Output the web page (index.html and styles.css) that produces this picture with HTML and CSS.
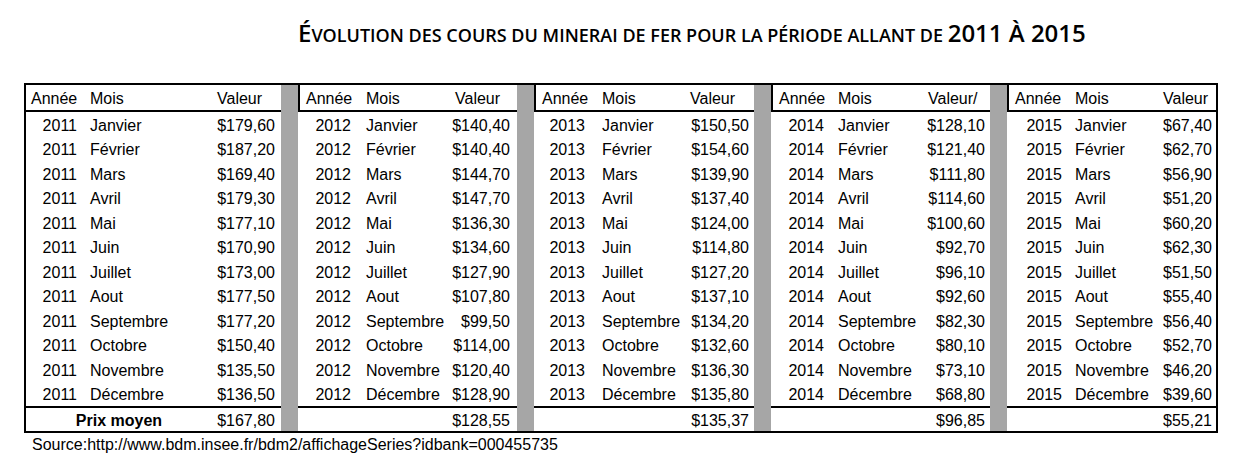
FILE: index.html
```html
<!DOCTYPE html>
<html lang="fr">
<head>
<meta charset="utf-8">
<title>Évolution des cours du minerai de fer</title>
<link rel="stylesheet" href="styles.css">
</head>
<body>
<div class="page">
  <h1 class="title"><span class="big">É</span><span class="sc">VOLUTION DES COURS DU MINERAI DE FER POUR LA PÉRIODE ALLANT DE </span><span class="big">2011 À 2015</span></h1>

  <div class="sheet">
    <div class="block b1">
      <div class="r hd"><span class="ha">Année</span><span class="m">Mois</span><span class="hv">Valeur</span></div>
      <div class="data">
        <div class="r"><span class="y">2011</span><span class="m">Janvier</span><span class="v">$179,60</span></div>
        <div class="r"><span class="y">2011</span><span class="m">Février</span><span class="v">$187,20</span></div>
        <div class="r"><span class="y">2011</span><span class="m">Mars</span><span class="v">$169,40</span></div>
        <div class="r"><span class="y">2011</span><span class="m">Avril</span><span class="v">$179,30</span></div>
        <div class="r"><span class="y">2011</span><span class="m">Mai</span><span class="v">$177,10</span></div>
        <div class="r"><span class="y">2011</span><span class="m">Juin</span><span class="v">$170,90</span></div>
        <div class="r"><span class="y">2011</span><span class="m">Juillet</span><span class="v">$173,00</span></div>
        <div class="r"><span class="y">2011</span><span class="m">Aout</span><span class="v">$177,50</span></div>
        <div class="r"><span class="y">2011</span><span class="m">Septembre</span><span class="v">$177,20</span></div>
        <div class="r"><span class="y">2011</span><span class="m">Octobre</span><span class="v">$150,40</span></div>
        <div class="r"><span class="y">2011</span><span class="m">Novembre</span><span class="v">$135,50</span></div>
        <div class="r"><span class="y">2011</span><span class="m">Décembre</span><span class="v">$136,50</span></div>
      </div>
      <div class="r tot"><span class="lbl">Prix moyen</span><span class="v">$167,80</span></div>
    </div>
    <div class="sep"></div>

    <div class="block b2">
      <div class="r hd"><span class="ha">Année</span><span class="m">Mois</span><span class="hv">Valeur</span></div>
      <div class="data">
        <div class="r"><span class="y">2012</span><span class="m">Janvier</span><span class="v">$140,40</span></div>
        <div class="r"><span class="y">2012</span><span class="m">Février</span><span class="v">$140,40</span></div>
        <div class="r"><span class="y">2012</span><span class="m">Mars</span><span class="v">$144,70</span></div>
        <div class="r"><span class="y">2012</span><span class="m">Avril</span><span class="v">$147,70</span></div>
        <div class="r"><span class="y">2012</span><span class="m">Mai</span><span class="v">$136,30</span></div>
        <div class="r"><span class="y">2012</span><span class="m">Juin</span><span class="v">$134,60</span></div>
        <div class="r"><span class="y">2012</span><span class="m">Juillet</span><span class="v">$127,90</span></div>
        <div class="r"><span class="y">2012</span><span class="m">Aout</span><span class="v">$107,80</span></div>
        <div class="r"><span class="y">2012</span><span class="m">Septembre</span><span class="v">$99,50</span></div>
        <div class="r"><span class="y">2012</span><span class="m">Octobre</span><span class="v">$114,00</span></div>
        <div class="r"><span class="y">2012</span><span class="m">Novembre</span><span class="v">$120,40</span></div>
        <div class="r"><span class="y">2012</span><span class="m">Décembre</span><span class="v">$128,90</span></div>
      </div>
      <div class="r tot"><span class="lbl"></span><span class="v">$128,55</span></div>
    </div>
    <div class="sep"></div>

    <div class="block b3">
      <div class="r hd"><span class="ha">Année</span><span class="m">Mois</span><span class="hv">Valeur</span></div>
      <div class="data">
        <div class="r"><span class="y">2013</span><span class="m">Janvier</span><span class="v">$150,50</span></div>
        <div class="r"><span class="y">2013</span><span class="m">Février</span><span class="v">$154,60</span></div>
        <div class="r"><span class="y">2013</span><span class="m">Mars</span><span class="v">$139,90</span></div>
        <div class="r"><span class="y">2013</span><span class="m">Avril</span><span class="v">$137,40</span></div>
        <div class="r"><span class="y">2013</span><span class="m">Mai</span><span class="v">$124,00</span></div>
        <div class="r"><span class="y">2013</span><span class="m">Juin</span><span class="v">$114,80</span></div>
        <div class="r"><span class="y">2013</span><span class="m">Juillet</span><span class="v">$127,20</span></div>
        <div class="r"><span class="y">2013</span><span class="m">Aout</span><span class="v">$137,10</span></div>
        <div class="r"><span class="y">2013</span><span class="m">Septembre</span><span class="v">$134,20</span></div>
        <div class="r"><span class="y">2013</span><span class="m">Octobre</span><span class="v">$132,60</span></div>
        <div class="r"><span class="y">2013</span><span class="m">Novembre</span><span class="v">$136,30</span></div>
        <div class="r"><span class="y">2013</span><span class="m">Décembre</span><span class="v">$135,80</span></div>
      </div>
      <div class="r tot"><span class="lbl"></span><span class="v">$135,37</span></div>
    </div>
    <div class="sep"></div>

    <div class="block b4">
      <div class="r hd"><span class="ha">Année</span><span class="m">Mois</span><span class="hv">Valeur/</span></div>
      <div class="data">
        <div class="r"><span class="y">2014</span><span class="m">Janvier</span><span class="v">$128,10</span></div>
        <div class="r"><span class="y">2014</span><span class="m">Février</span><span class="v">$121,40</span></div>
        <div class="r"><span class="y">2014</span><span class="m">Mars</span><span class="v">$111,80</span></div>
        <div class="r"><span class="y">2014</span><span class="m">Avril</span><span class="v">$114,60</span></div>
        <div class="r"><span class="y">2014</span><span class="m">Mai</span><span class="v">$100,60</span></div>
        <div class="r"><span class="y">2014</span><span class="m">Juin</span><span class="v">$92,70</span></div>
        <div class="r"><span class="y">2014</span><span class="m">Juillet</span><span class="v">$96,10</span></div>
        <div class="r"><span class="y">2014</span><span class="m">Aout</span><span class="v">$92,60</span></div>
        <div class="r"><span class="y">2014</span><span class="m">Septembre</span><span class="v">$82,30</span></div>
        <div class="r"><span class="y">2014</span><span class="m">Octobre</span><span class="v">$80,10</span></div>
        <div class="r"><span class="y">2014</span><span class="m">Novembre</span><span class="v">$73,10</span></div>
        <div class="r"><span class="y">2014</span><span class="m">Décembre</span><span class="v">$68,80</span></div>
      </div>
      <div class="r tot"><span class="lbl"></span><span class="v">$96,85</span></div>
    </div>
    <div class="sep"></div>

    <div class="block b5">
      <div class="r hd"><span class="ha">Année</span><span class="m">Mois</span><span class="hv">Valeur</span></div>
      <div class="data">
        <div class="r"><span class="y">2015</span><span class="m">Janvier</span><span class="v">$67,40</span></div>
        <div class="r"><span class="y">2015</span><span class="m">Février</span><span class="v">$62,70</span></div>
        <div class="r"><span class="y">2015</span><span class="m">Mars</span><span class="v">$56,90</span></div>
        <div class="r"><span class="y">2015</span><span class="m">Avril</span><span class="v">$51,20</span></div>
        <div class="r"><span class="y">2015</span><span class="m">Mai</span><span class="v">$60,20</span></div>
        <div class="r"><span class="y">2015</span><span class="m">Juin</span><span class="v">$62,30</span></div>
        <div class="r"><span class="y">2015</span><span class="m">Juillet</span><span class="v">$51,50</span></div>
        <div class="r"><span class="y">2015</span><span class="m">Aout</span><span class="v">$55,40</span></div>
        <div class="r"><span class="y">2015</span><span class="m">Septembre</span><span class="v">$56,40</span></div>
        <div class="r"><span class="y">2015</span><span class="m">Octobre</span><span class="v">$52,70</span></div>
        <div class="r"><span class="y">2015</span><span class="m">Novembre</span><span class="v">$46,20</span></div>
        <div class="r"><span class="y">2015</span><span class="m">Décembre</span><span class="v">$39,60</span></div>
      </div>
      <div class="r tot"><span class="lbl"></span><span class="v">$55,21</span></div>
    </div>
  </div>

  <p class="source">Source:http://www.bdm.insee.fr/bdm2/affichageSeries?idbank=000455735</p>
</div>
</body>
</html>
```

FILE: styles.css
```css
html, body {
  margin: 0;
  padding: 0;
  background: #fff;
}

.page {
  width: 1245px;
  height: 469px;
  overflow: hidden;
  font-family: "Liberation Sans", Arial, sans-serif;
  font-size: 16px;
  color: #000;
}

.title {
  margin: 15px 0 0 298px;
  height: 30px;
  line-height: 30px;
  font-family: "Open Sans", "Liberation Sans", sans-serif;
  font-weight: 600;
  letter-spacing: 0;
  white-space: nowrap;
  color: #000;
}

.title .big {
  font-size: 24px;
}

.title .sc {
  font-size: 18px;
}

.sheet {
  margin: 38px 0 0 24px;
  width: 1190px;
  display: flex;
  align-items: stretch;
  border: 2px solid #000;
}

.sep {
  width: 17px;
  flex: none;
  background: #a6a6a6;
}

.block {
  flex: none;
  display: flex;
  flex-direction: column;
  --cols: 58px 128px 69px;
  --ap: 5px;
  --yp: 7px;
  --vp: 6px;
}

.b2 { --cols: 60px 90px 67px; --ap: 6px; --yp: 9px; --vp: 7px; }
.b3 { --cols: 60px 89px 69px; --ap: 6px; --yp: 11px; --vp: 5px; }
.b4 { --cols: 59px 91px 67px; --ap: 6px; --yp: 8px; --vp: 5px; }
.b5 { --cols: 60px 89px 58px; --ap: 6px; --yp: 7px; --vp: 4px; }

.r {
  display: grid;
  grid-template-columns: var(--cols);
  align-items: center;
  height: 24.5px;
  white-space: nowrap;
}

.r > span {
  padding-top: 3px;
}

.b2 .r, .b3 .r, .b4 .r, .b5 .r {
  border-left: 2px solid transparent;
}

.b2 .hd, .b3 .hd, .b4 .hd, .b5 .hd {
  border-left-color: #000;
}

.hd {
  height: 25px;
  border-bottom: 2px solid #000;
}

.data {
  border-bottom: 2px solid #000;
}

.tot {
  height: 23px;
}

.ha { padding-left: var(--ap); }
.m { padding-left: 6px; }
.hv { padding-left: 5px; }
.y { text-align: right; padding-right: var(--yp); }
.v { text-align: right; padding-right: var(--vp); }

.lbl {
  grid-column: 1 / 3;
  text-align: center;
  font-weight: bold;
}

.source {
  margin: 2px 0 0 32px;
  line-height: 20px;
  white-space: nowrap;
}
```
